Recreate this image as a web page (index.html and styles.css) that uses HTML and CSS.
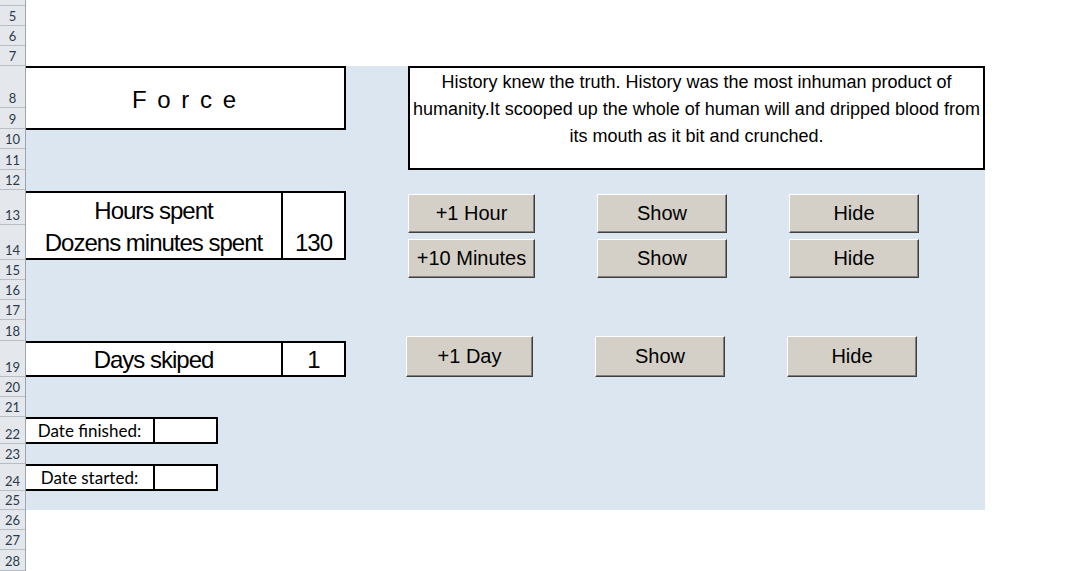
FILE: index.html
```html
<!DOCTYPE html>
<html lang="en">
<head>
    <meta charset="UTF-8">
    <title>Force - time sheet</title>
    <link rel="stylesheet" href="styles.css">
</head>
<body>

    <!-- Row numbers -->
    <div class="rowhead">
        <div class="rn h6"></div>
        <div class="rn h20">5</div>
        <div class="rn h20">6</div>
        <div class="rn h20">7</div>
        <div class="rn h42">8</div>
        <div class="rn h21">9</div>
        <div class="rn h20">10</div>
        <div class="rn h21">11</div>
        <div class="rn h20">12</div>
        <div class="rn h35">13</div>
        <div class="rn h35">14</div>
        <div class="rn h20">15</div>
        <div class="rn h20">16</div>
        <div class="rn h20">17</div>
        <div class="rn h21">18</div>
        <div class="rn h36">19</div>
        <div class="rn h20">20</div>
        <div class="rn h20">21</div>
        <div class="rn h27">22</div>
        <div class="rn h20">23</div>
        <div class="rn h27">24</div>
        <div class="rn h19">25</div>
        <div class="rn h20">26</div>
        <div class="rn h20">27</div>
        <div class="rn h21">28</div>
    </div>

    <!-- Sheet -->
    <div class="sheet">
        <div class="zone"></div>

        <div class="title-box">F o r c e</div>

        <div class="quote-box">
            History knew the truth. History was the most inhuman product of
            humanity.It scooped up the whole of human will and dripped blood from
            its mouth as it bit and crunched.
        </div>

        <div class="counter hours">
            <div class="label">
                <span>Hours spent</span>
                <span>Dozens minutes spent</span>
            </div>
            <div class="value">130</div>
        </div>

        <div class="buttons hours-buttons">
            <button class="btn first">+1 Hour</button>
            <button class="btn">Show</button>
            <button class="btn">Hide</button>
            <button class="btn first">+10 Minutes</button>
            <button class="btn">Show</button>
            <button class="btn">Hide</button>
        </div>

        <div class="counter days">
            <div class="label"><span>Days skiped</span></div>
            <div class="value">1</div>
        </div>

        <div class="buttons day-buttons">
            <button class="btn first">+1 Day</button>
            <button class="btn">Show</button>
            <button class="btn">Hide</button>
        </div>

        <div class="date-box finished">
            <div class="date-label">Date finished:</div>
            <div class="date-value"></div>
        </div>

        <div class="date-box started">
            <div class="date-label">Date started:</div>
            <div class="date-value"></div>
        </div>
    </div>

</body>
</html>
```

FILE: styles.css
```css
/* General Reset */
* {
    margin: 0;
    padding: 0;
    box-sizing: border-box;
}

body {
    background: #ffffff;
    display: flex;
    height: 571px;
    overflow: hidden;
    font-family: "Liberation Sans", Arial, sans-serif;
    color: #000;
}

/* Row header column */
.rowhead {
    width: 26px;
    flex: none;
    display: flex;
    flex-direction: column;
    background: #e4e7eb;
    border-right: 1px solid #9ea5ae;
}

.rn {
    flex: none;
    border-bottom: 1px solid #b8bec6;
    font-family: "Lato", "Open Sans", sans-serif;
    font-size: 13px;
    color: #2b3a4c;
    display: flex;
    align-items: flex-end;
    justify-content: center;
    line-height: 18px;
}

.h6 { height: 6px; }
.h19 { height: 19px; }
.h20 { height: 20px; }
.h21 { height: 21px; }
.h27 { height: 27px; }
.h35 { height: 35px; }
.h36 { height: 36px; }
.h42 { height: 42px; }

/* Sheet grid: one track per spreadsheet row */
.sheet {
    flex: 1;
    display: grid;
    grid-template-columns: 382px 577px 1fr;
    grid-template-rows: 6px 20px 20px 20px 42px 21px 20px 21px 20px 35px 35px 20px 20px 20px 21px 36px 20px 20px 27px 20px 27px 19px 20px 20px 21px;
}

.zone {
    grid-column: 1 / 3;
    grid-row: 5 / 23;
    background: #dce6f0;
}

/* Force title */
.title-box {
    grid-column: 1;
    grid-row: 5 / 7;
    width: 320px;
    height: 64px;
    background: #fff;
    border: 2px solid #000;
    border-left: none;
    font-size: 24px;
    letter-spacing: 2px;
    text-align: center;
    padding-top: 18px;
}

/* Quote text box */
.quote-box {
    grid-column: 2;
    grid-row: 5 / 9;
    background: #fff;
    border: 2px solid #000;
    font-size: 18px;
    line-height: 27px;
    text-align: center;
    padding: 1px 2px 0;
}

/* Counter tables */
.counter {
    grid-column: 1;
    width: 320px;
    background: #fff;
    border: 2px solid #000;
    border-left: none;
    display: grid;
    grid-template-columns: 255px 1fr;
    font-size: 24px;
    letter-spacing: -1px;
    white-space: nowrap;
}

.counter .label {
    display: flex;
    flex-direction: column;
    align-items: center;
}

.counter .value {
    border-left: 2px solid #000;
    display: flex;
    align-items: flex-end;
    justify-content: center;
}

.hours {
    grid-row: 10 / 12;
    margin-top: 1px;
}

.hours .label {
    justify-content: space-between;
    line-height: 31px;
    padding-top: 2px;
}

.hours .value {
    line-height: 31px;
}

.days {
    grid-row: 16;
}

.days .label,
.days .value {
    line-height: 34px;
}

/* Buttons */
.buttons {
    grid-column: 2;
    display: grid;
    grid-template-columns: 127px 130px 130px;
    column-gap: 62px;
    align-self: start;
}

.hours-buttons {
    grid-row: 10 / 13;
    row-gap: 6px;
    padding-top: 4px;
}

.day-buttons {
    grid-row: 15 / 17;
    align-self: end;
    margin-left: -2px;
}

.btn {
    height: 39px;
    background: #d4d0c8;
    border: 1px solid;
    border-color: #ffffff #404040 #404040 #ffffff;
    box-shadow: inset -1px -1px 0 #808080;
    font-family: "Liberation Sans", Arial, sans-serif;
    font-size: 20px;
    color: #000;
}

.day-buttons .btn {
    height: 41px;
}

/* Date boxes */
.date-box {
    grid-column: 1;
    width: 192px;
    background: #fff;
    border: 2px solid #000;
    border-left: none;
    display: grid;
    grid-template-columns: 127px 1fr;
    font-family: "Lato", "Open Sans", sans-serif;
    font-size: 17px;
}

.date-label {
    text-align: center;
    line-height: 23px;
}

.date-value {
    border-left: 2px solid #000;
}

.finished {
    grid-row: 19;
}

.started {
    grid-row: 21;
}
```
